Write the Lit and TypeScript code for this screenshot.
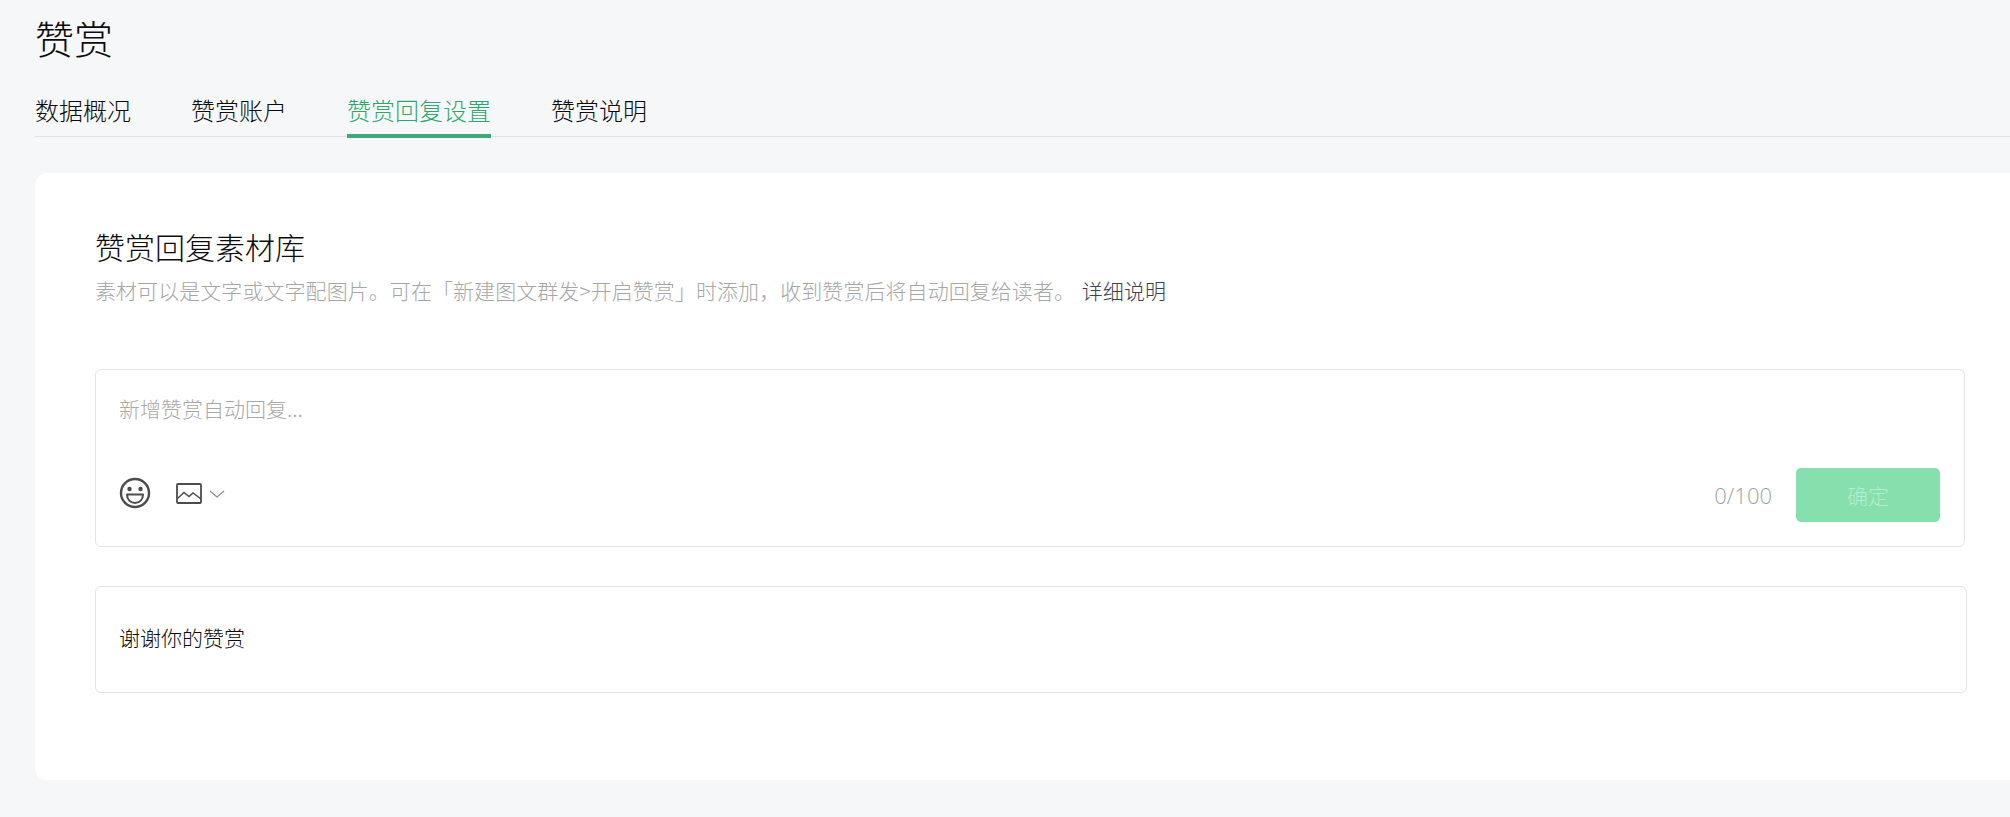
import { LitElement, html, css } from "lit";
import { customElement } from "lit/decorators.js";

@customElement("app-root")
export class AppRoot extends LitElement {
  static styles = css`
    :host {
      display: block;
      width: 2010px;
      height: 817px;
      overflow: hidden;
      background: #f6f7f9;
      font-family: "Noto Sans CJK SC", "Noto Sans", sans-serif;
      font-weight: 300;
      color: #0c0c0c;
    }
    .page { padding: 0 0 0 35px; box-sizing: border-box; height: 817px; display: flex; flex-direction: column; }
    h1 { margin: 0; font-weight: 300; font-size: 39px; line-height: 48px; padding-top: 13px; height: 50px; }
    .tabs { margin-top: 22px; display: flex; gap: 60px; border-bottom: 1px solid #dfe1e4; box-sizing: border-box; height: 52px; padding-top: 9px; }
    .tab { font-size: 24px; line-height: 32px; box-sizing: border-box; }
    .tab.on { color: #2fa76c; border-bottom: 4px solid #3fa877; height: 44px; }
    .card {
      margin-top: 36px;
      height: 607px;
      background: #fff;
      border-radius: 12px 0 0 12px;
      padding: 53px 0 0 60px;
      box-sizing: border-box;
      display: flex;
      flex-direction: column;
    }
    h2 { margin: 0; font-weight: 300; font-size: 30px; line-height: 40px; }
    .sub { margin-top: 8px; font-size: 21px; line-height: 32px; color: #a6a6a6; white-space: nowrap; letter-spacing: 0.06px; }
    .sub a { color: #3a4150; margin-left: 2px; }
    .box { border: 1px solid #e4e4e4; border-radius: 6px; box-sizing: border-box; }
    .editor {
      margin-top: 63px;
      margin-right: 45px;
      height: 178px;
      padding: 21px 24px 24px 23px;
      display: flex;
      flex-direction: column;
      justify-content: space-between;
    }
    .ph { font-size: 21px; line-height: 34px; color: #a8a8a8; }
    .tools { display: flex; align-items: center; }
    .tools svg { display: block; margin-bottom: 4px; }
    .tools svg.img { margin-left: 25px; }
    .tools svg.chev { margin-left: 7px; margin-bottom: 2px; }
    .count { margin-left: auto; font-size: 22px; color: #a3a3a3; font-family: "Open Sans", sans-serif; }
    .btn {
      margin-left: 24px;
      width: 144px;
      height: 54px;
      border-radius: 5px;
      background: #86e0ae;
      color: #b4ecce;
      font-size: 21px;
      display: flex;
      align-items: center;
      justify-content: center;
    }
    .item {
      margin-top: 39px;
      margin-right: 43px;
      height: 107px;
      padding: 0 0 6px 23px;
      display: flex;
      align-items: center;
      font-size: 21px;
    }
  `;

  render() {
    return html`
      <div class="page">
        <h1>赞赏</h1>
        <div class="tabs">
          <div class="tab">数据概况</div>
          <div class="tab">赞赏账户</div>
          <div class="tab on">赞赏回复设置</div>
          <div class="tab">赞赏说明</div>
        </div>
        <div class="card">
          <h2>赞赏回复素材库</h2>
          <div class="sub">素材可以是文字或文字配图片。可在「新建图文群发&gt;开启赞赏」时添加，收到赞赏后将自动回复给读者。 <a>详细说明</a></div>
          <div class="box editor">
            <div class="ph">新增赞赏自动回复...</div>
            <div class="tools">
              <svg width="32" height="32" viewBox="0 0 32 32" fill="none" stroke="#4c4c4c" stroke-width="2.4">
                <circle cx="16" cy="16" r="14" />
                <circle cx="10.5" cy="12" r="2.2" fill="#4c4c4c" stroke="none" />
                <circle cx="21.5" cy="12" r="2.2" fill="#4c4c4c" stroke="none" />
                <path d="M8 17.5h16c0 5-3.4 8.5-8 8.500s-8-3.500-8-8.500z" stroke-width="2" stroke-linejoin="round" />
              </svg>
              <svg class="img" width="26" height="21" viewBox="0 0 26 21" fill="none" stroke="#4c4c4c" stroke-width="1.8">
                <rect x="1" y="1" width="24" height="19" rx="1" />
                <path d="M1.500 15.500l6.500-6 5 4 4-3.500 8 6" stroke-width="1.500" />
              </svg>
              <svg class="chev" width="16" height="8" viewBox="0 0 16 8" fill="none" stroke="#8a8a8a" stroke-width="1.200">
                <path d="M1 1l7 6 7-6" />
              </svg>
              <span class="count">0/100</span>
              <div class="btn">确定</div>
            </div>
          </div>
          <div class="box item">谢谢你的赞赏</div>
        </div>
      </div>
    `;
  }
}
